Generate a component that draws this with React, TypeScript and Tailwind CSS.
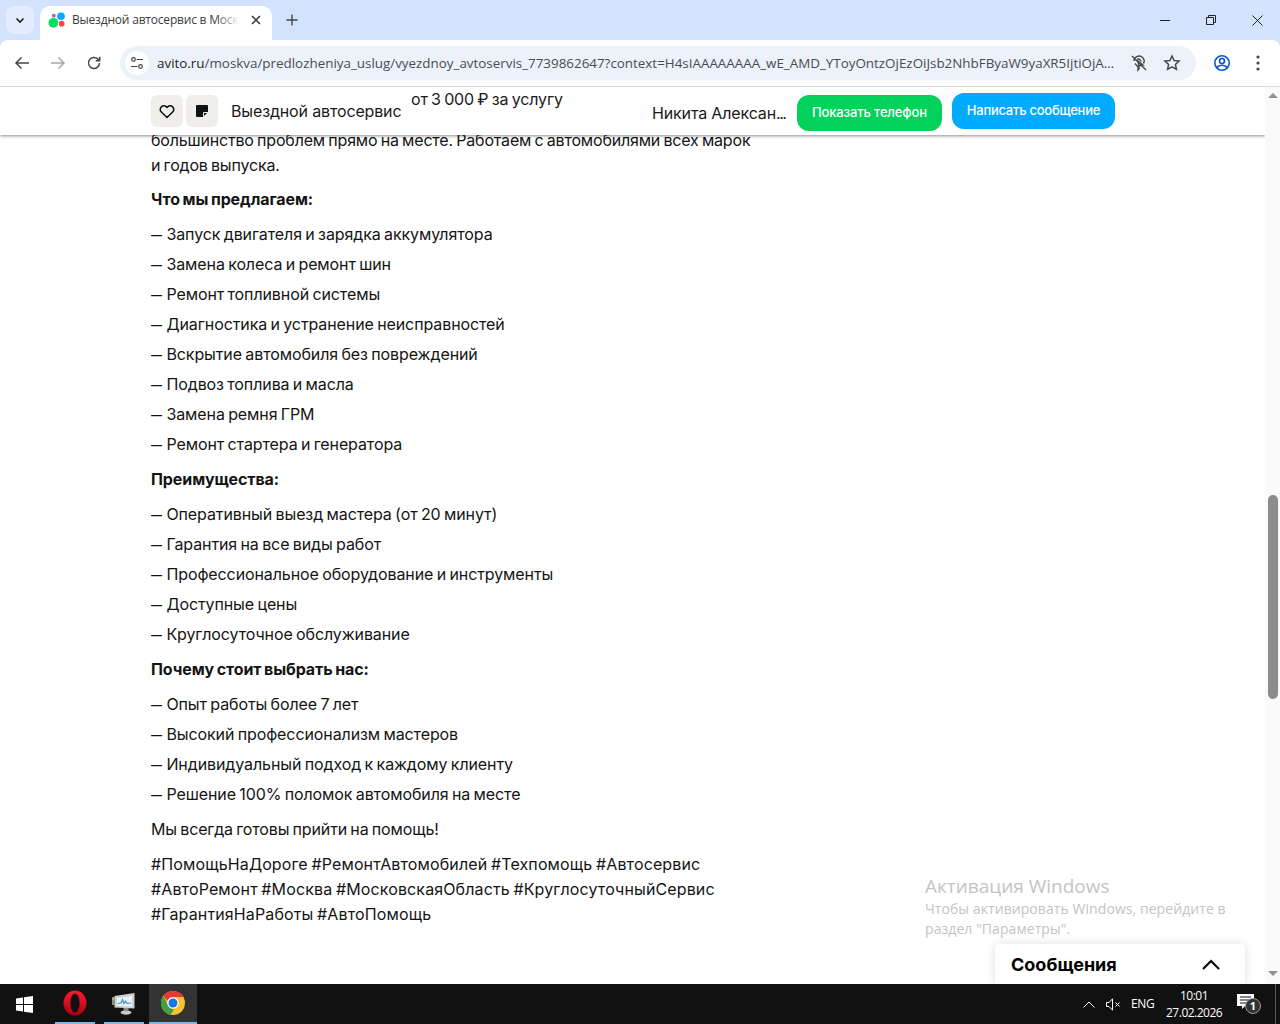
const body = "font-['Inter','Liberation_Sans',sans-serif]";

type Line = { text: string; kind: "p" | "b" | "li" | "last" };

const lines: Line[] = [
  { text: "Что мы предлагаем:", kind: "b" },
  { text: "Запуск двигателя и зарядка аккумулятора", kind: "li" },
  { text: "Замена колеса и ремонт шин", kind: "li" },
  { text: "Ремонт топливной системы", kind: "li" },
  { text: "Диагностика и устранение неисправностей", kind: "li" },
  { text: "Вскрытие автомобиля без повреждений", kind: "li" },
  { text: "Подвоз топлива и масла", kind: "li" },
  { text: "Замена ремня ГРМ", kind: "li" },
  { text: "Ремонт стартера и генератора", kind: "last" },
  { text: "Преимущества:", kind: "b" },
  { text: "Оперативный выезд мастера (от 20 минут)", kind: "li" },
  { text: "Гарантия на все виды работ", kind: "li" },
  { text: "Профессиональное оборудование и инструменты", kind: "li" },
  { text: "Доступные цены", kind: "li" },
  { text: "Круглосуточное обслуживание", kind: "last" },
  { text: "Почему стоит выбрать нас:", kind: "b" },
  { text: "Опыт работы более 7 лет", kind: "li" },
  { text: "Высокий профессионализм мастеров", kind: "li" },
  { text: "Индивидуальный подход к каждому клиенту", kind: "li" },
  { text: "Решение 100% поломок автомобиля на месте", kind: "last" },
  { text: "Мы всегда готовы прийти на помощь!", kind: "p" },
];

function lineClass(kind: Line["kind"]) {
  if (kind === "b") return "mb-[10px] font-bold tracking-[-0.1px]";
  if (kind === "li") return "mb-[5px] tracking-[-0.1px]";
  if (kind === "last") return "mb-[10px] tracking-[-0.1px]";
  return "mb-[10px]";
}

function TabStrip() {
  return (
    <div className="flex h-10 items-start bg-[#d3e3fd] pl-[6px]">
      <div className="mt-[6px] flex h-7 w-7 items-center justify-center rounded-lg bg-[#e4edfd]">
        <svg width="12" height="12" viewBox="0 0 12 12" fill="none" stroke="#1f1f1f" strokeWidth="1.6"><path d="M2.5 4.5 6 8l3.5-3.500" /></svg>
      </div>
      <div className="ml-[6px] mt-[6px] flex h-[34px] w-[232px] items-center rounded-t-[10px] bg-white pb-[6px] pl-[8px]">
        <svg width="18" height="18" viewBox="0 0 18 18" className="shrink-0">
          <circle cx="13" cy="5.300" r="3.800" fill="#0af" />
          <circle cx="5.400" cy="11.800" r="4.900" fill="#04e061" />
          <circle cx="13.700" cy="12.700" r="2.900" fill="#ff4053" />
          <circle cx="5.800" cy="4.700" r="1.900" fill="#965eeb" />
        </svg>
        <div className="relative ml-[6px] h-[18px] w-[168px] overflow-hidden whitespace-nowrap font-['Open_Sans',sans-serif] text-[12px] leading-[18px] tracking-[-0.2px] text-[#3c3c3c]">
          Выездной автосервис в Москве
          <div className="absolute inset-y-0 right-0 w-6 bg-gradient-to-r from-white/0 to-white" />
        </div>
        <svg width="10" height="10" viewBox="0 0 10 10" stroke="#333" strokeWidth="1.500" className="ml-[11px]"><path d="M1 1l8 8M9 1 1 9" /></svg>
      </div>
      <svg width="12" height="12" viewBox="0 0 12 12" stroke="#444" strokeWidth="1.400" className="ml-[14px] mt-[14px]"><path d="M6 .5v11M.5 6h11" /></svg>
      <div className="ml-auto flex h-10 items-center">
        <div className="flex w-[46px] justify-center">
          <svg width="10" height="10" viewBox="0 0 10 10" stroke="#222"><path d="M0 5.500h10" /></svg>
        </div>
        <div className="flex w-[46px] justify-center">
          <svg width="10" height="10" viewBox="0 0 10 10" fill="none" stroke="#222"><path d="M.5 2.500h7v7h-7zM2.500 2.500v-2h7v7h-2" /></svg>
        </div>
        <div className="flex w-[46px] justify-center">
          <svg width="11" height="11" viewBox="0 0 11 11" stroke="#222"><path d="M.5.5l10 10M10.500.5l-10 10" /></svg>
        </div>
      </div>
    </div>
  );
}

function Toolbar() {
  return (
    <div className="bg-[#d3e3fd]">
      <div className="flex h-[47px] items-center rounded-t-[8px] border-b border-[#d9d9d9] bg-white">
        <div className="flex w-[120px] items-center">
          <svg width="16" height="16" viewBox="0 0 16 16" fill="none" stroke="#474747" strokeWidth="1.500" className="ml-[14px]"><path d="M15 8H2M7.500 2.500 2 8l5.500 5.500" /></svg>
          <svg width="16" height="16" viewBox="0 0 16 16" fill="none" stroke="#a8a8a8" strokeWidth="1.500" className="ml-[20px]"><path d="M1 8h13M8.500 2.500 14 8l-5.500 5.500" /></svg>
          <svg width="16" height="16" viewBox="0 0 16 16" fill="none" stroke="#474747" strokeWidth="1.500" className="ml-[20px]"><path d="M13.500 8a5.500 5.500 0 1 1-1.600-3.900L13.500 5.700M13.700 1.800v4h-4" /></svg>
        </div>
        <div className="flex h-[34px] w-[1076px] items-center rounded-full bg-[#edf2fa] pl-[5px]">
          <div className="flex h-6 w-6 items-center justify-center rounded-full bg-white">
            <svg width="14" height="14" viewBox="0 0 14 14" fill="none" stroke="#474747" strokeWidth="1.200">
              <circle cx="3.500" cy="3.500" r="1.800" />
              <circle cx="10.500" cy="10.500" r="1.800" />
              <path d="M6.500 3.500H13M1 10.500h6.500" />
            </svg>
          </div>
          <div className="ml-[8px] w-[960px] overflow-hidden whitespace-nowrap font-['Open_Sans',sans-serif] text-[13.4px] text-[#1f1f1f]">
            <span>avito.ru</span>
            <span className="text-[#474c54]">/moskva/predlozheniya_uslug/vyezdnoy_avtoservis_7739862647?context=H4sIAAAAAAAA_wE_AMD_YToyOntzOjEzOiJsb2NhbFByaW9yaXR5IjtiOjA…</span>
          </div>
          <svg width="18" height="18" viewBox="0 0 18 18" fill="none" stroke="#474747" strokeWidth="1.400" className="ml-[13px] shrink-0">
            <path d="M4 7a5 5 0 0 1 8-4l1 1a5 5 0 0 1 .500 5.500M7 5.500a2.500 2.500 0 0 1 4 2M5 9.500l3 3.500v3l1.500-2M2 2l14 14" />
            <path d="M8 7l1 6 1.500-2 2.500 0z" />
          </svg>
          <svg width="18" height="18" viewBox="0 0 18 18" fill="none" stroke="#474747" strokeWidth="1.500" className="ml-[15px] shrink-0"><path d="M9 2l2.100 4.600 5 .500-3.700 3.400 1 4.900L9 12.900 4.600 15.400l1-4.900L1.900 7.100l5-.500z" /></svg>
        </div>
        <svg width="18" height="18" viewBox="0 0 18 18" fill="none" stroke="#0b57d0" strokeWidth="1.600" className="ml-[17px]">
          <circle cx="9" cy="9" r="7.200" />
          <circle cx="9" cy="7" r="2.500" />
          <path d="M3.800 13.800c1.200-1.800 3-2.500 5.200-2.500s4 .7 5.200 2.500" />
        </svg>
        <svg width="4" height="16" viewBox="0 0 4 16" fill="#474747" className="ml-[25px]"><circle cx="2" cy="2" r="1.600" /><circle cx="2" cy="8" r="1.600" /><circle cx="2" cy="14" r="1.600" /></svg>
      </div>
    </div>
  );
}

function StickyBar() {
  return (
    <div className={`absolute left-0 right-[15px] top-0 h-[48px] bg-white shadow-[0_1px_3px_rgba(0,0,0,0.45)] ${body} whitespace-nowrap tracking-[-0.15px] text-[#1a1a1a]`}>
      <div className="absolute left-[151px] top-[8px] flex gap-[3px]">
        <div className="flex h-8 w-8 items-center justify-center rounded-md bg-[#f0eeea]">
          <svg width="16" height="15" viewBox="0 0 16 15" fill="none" stroke="#111" strokeWidth="1.500"><path d="M8 13.500 2.300 8a3.600 3.600 0 0 1 0-5.100 3.600 3.600 0 0 1 5.100 0L8 3.500l.600-.600a3.600 3.600 0 0 1 5.100 0 3.600 3.600 0 0 1 0 5.100z" /></svg>
        </div>
        <div className="flex h-8 w-8 items-center justify-center rounded-md bg-[#f0eeea]">
          <svg width="12" height="12" viewBox="0 0 12 12" fill="#111"><path d="M0 1a1 1 0 0 1 1-1h10a1 1 0 0 1 1 1v6L7 12H1a1 1 0 0 1-1-1z" /><path d="M7.500 7.500H12" stroke="#f0eeea" /><path d="M7.500 7.500V12" stroke="#f0eeea" /></svg>
        </div>
      </div>
      <div className="absolute left-[231px] top-[13px] text-[16px] leading-[22px]">Выездной автосервис</div>
      <div className="absolute left-[411px] top-[1px] text-[16px] leading-[22px] [word-spacing:-1px]">от 3 000 ₽ за услугу</div>
      <div className="absolute left-[652px] top-[15px] text-[16px] leading-[22px]">Никита Алексан<span className="tracking-[-1.4px]">...</span></div>
      <div className="absolute left-[797px] top-[8px] flex h-9 w-[145px] items-center justify-center rounded-xl bg-[#02d15c] pb-[2px] text-[13px] font-medium text-white">Показать телефон</div>
      <div className="absolute left-[952px] top-[6px] flex h-9 w-[163px] items-center justify-center rounded-xl bg-[#00aaff] pb-[2px] text-[13px] font-medium tracking-[-0.25px] text-white">Написать сообщение</div>
    </div>
  );
}

function PageBody() {
  return (
    <div className={`relative h-[897px] overflow-hidden bg-white ${body} text-[16px] leading-[25px] text-[#141414]`}>
      <div className="ml-[151px] whitespace-nowrap pt-[41px] tracking-[-0.15px] [word-spacing:-1px]">
        <p className="mb-[9px] tracking-[-0.18px]">
          большинство проблем прямо на месте. Работаем с автомобилями всех марок
          <br />
          и годов выпуска.
        </p>
        {lines.map((line) => (
          <p key={line.text} className={lineClass(line.kind)}>
            {line.kind === "li" || line.kind === "last" ? (
              <>
                <span className="mr-[1px] align-[1px] text-[11px] font-semibold leading-[0] tracking-normal">—</span> {line.text}
              </>
            ) : (
              line.text
            )}
          </p>
        ))}
        <p className="tracking-[0.13px]">
          #ПомощьНаДороге #РемонтАвтомобилей #Техпомощь #Автосервис
          <br />
          #АвтоРемонт #Москва #МосковскаяОбласть #КруглосуточныйСервис
          <br />
          #ГарантияНаРаботы #АвтоПомощь
        </p>
      </div>

      <StickyBar />

      <div className="absolute left-[925px] top-[787px] w-[320px] font-['Open_Sans',sans-serif] text-[14px] leading-[20px] tracking-[0.07px] text-[#c4c4c4]">
        <div className="text-[19px] leading-[25px] tracking-normal">Активация Windows</div>
        Чтобы активировать Windows, перейдите в раздел "Параметры".
      </div>

      <div className="absolute bottom-0 left-[995px] flex h-10 w-[250px] items-center justify-between rounded-t-[4px] bg-white pl-4 pr-[25px] shadow-[0_0_12px_rgba(0,0,0,0.12)]">
        <span className="text-[18px] font-bold text-black">Сообщения</span>
        <svg width="18" height="11" viewBox="0 0 18 11" fill="none" stroke="#000" strokeWidth="2"><path d="M1 10l8-8 8 8" /></svg>
      </div>

      <div className="absolute inset-y-0 right-0 flex w-[15px] flex-col items-center bg-[#fafafa]">
        <div className="mt-[6px] h-0 w-0 border-x-[5px] border-b-[5px] border-x-transparent border-b-[#909090]" />
        <div className="ml-[3px] mt-[397px] h-[204px] w-[10px] self-start rounded-t-full rounded-b-full bg-[#8c8c8c]" />
        <div className="mb-[8px] mt-auto h-0 w-0 border-x-[5px] border-t-[5px] border-x-transparent border-t-[#909090]" />
      </div>
    </div>
  );
}

function Taskbar() {
  return (
    <div className="flex h-10 items-stretch bg-[#111111] font-['Open_Sans',sans-serif] text-white">
      <div className="flex w-[48px] items-center justify-center">
        <svg width="17" height="17" viewBox="0 0 17 17" fill="#fff"><path d="M0 2.500 7 1.500v6.500H0zM8 1.300 17 0v8H8zM0 9h7v6.500l-7-1zM8 9h9v8l-9-1.300z" /></svg>
      </div>
      <div className="ml-[7px] flex w-[40px] items-center justify-center border-b-2 border-[#76b9ed]">
        <svg width="24" height="26" viewBox="0 0 24 26">
          <defs>
            <linearGradient id="opera" x1="0" y1="0" x2="0" y2="1">
              <stop offset="0" stopColor="#ff1b2d" />
              <stop offset="1" stopColor="#a70014" />
            </linearGradient>
          </defs>
          <ellipse cx="12" cy="13" rx="11.500" ry="12.500" fill="url(#opera)" />
          <ellipse cx="12" cy="13" rx="4.600" ry="9.500" fill="#111" />
        </svg>
      </div>
      <div className="ml-[9px] flex w-[40px] items-center justify-center border-b-2 border-[#76b9ed]">
        <svg width="24" height="24" viewBox="0 0 24 24">
          <ellipse cx="14" cy="21.500" rx="5.500" ry="2.200" fill="#c8c8c8" />
          <rect x="11.500" y="17" width="5" height="3" fill="#8a8a8a" />
          <path d="M2.500 5l20-3v15.500l-20-1z" fill="#cfcfcf" />
          <path d="M5 7l15-2v10.500L5 14.800z" fill="#e8f1f8" />
          <path d="M6 12.500l3-.5 1.500-3.500 1.500 4 1.500-2.500 1.500 2.500 4-.5" fill="none" stroke="#3d8fc7" strokeWidth="1.100" />
          <rect x="0" y="6" width="3" height="8" fill="#8c8c8c" />
          <rect x="0.500" y="7" width="2" height="2" fill="#7fd05a" />
        </svg>
      </div>
      <div className="ml-[5px] flex w-[48px] items-center justify-center border-b-2 border-[#76b9ed] bg-[#333333]">
        <svg width="24" height="24" viewBox="0 0 24 24">
          <circle cx="12" cy="12" r="12" fill="#fbc02d" />
          <path d="M12 0a12 12 0 0 1 10.400 6H12a6 6 0 0 0-5.600 3.800L2.200 5A12 12 0 0 1 12 0z" fill="#e53935" />
          <path d="M2.200 5l5 8.700a5.500 5.500 0 0 0 6 4.100L9.800 23.800A12 12 0 0 1 2.200 5z" fill="#43a047" />
          <circle cx="12" cy="12" r="5.800" fill="#fff" />
          <circle cx="12" cy="12" r="4.500" fill="#1a73e8" />
        </svg>
      </div>
      <div className="ml-auto flex items-center">
        <svg width="12" height="7" viewBox="0 0 12 7" fill="none" stroke="#fff"><path d="M.5 6.500 6 1l5.500 5.500" /></svg>
        <svg width="15" height="13" viewBox="0 0 15 13" fill="none" stroke="#fff" className="ml-[11px]"><path d="M.5 4.500h2.500L6.500.8v11.400L3 8.500H.5zM9.500 4.500l4 4M13.500 4.500l-4 4" /></svg>
        <span className="ml-[10px] w-[24px] whitespace-nowrap text-[12px] tracking-[-0.3px]">ENG</span>
        <div className="ml-[11px] w-[56px] text-center text-[12px] leading-[17px] tracking-[-0.5px]">
          <div>10:01</div>
          <div className="whitespace-nowrap">27.02.2026</div>
        </div>
        <div className="relative ml-[15px] h-[20px] w-[20px]">
          <svg width="17" height="16" viewBox="0 0 17 16" fill="#fff"><path d="M0 0h17v12H8l-3 3v-3H0z" /><path d="M3 3h11M3 6h11M3 9h8" stroke="#111" /></svg>
          <div className="absolute left-[8px] top-[4px] flex h-4 w-4 items-center justify-center rounded-full border border-[#999] bg-[#333] text-[11px] font-bold">1</div>
        </div>
        <div className="ml-[18px] mr-[4px] h-full w-px bg-[#555555]" />
      </div>
    </div>
  );
}

export default function App() {
  return (
    <div className="h-[1024px] w-[1280px] overflow-hidden">
      <TabStrip />
      <Toolbar />
      <PageBody />
      <Taskbar />
    </div>
  );
}
